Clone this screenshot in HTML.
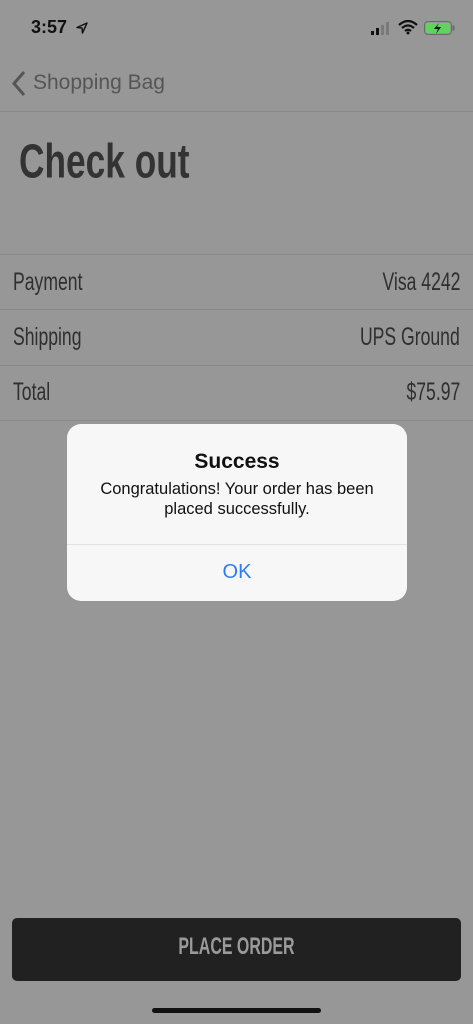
<!DOCTYPE html>
<html><head><style>
body{margin:0;width:473px;height:1024px;background:#979797;position:relative;overflow:hidden;font-family:"Liberation Sans",sans-serif}
.a{position:absolute}
.n{font-family:"Liberation Sans Narrow","Liberation Sans",sans-serif;color:#2f2f2f}
.line{position:absolute;left:0;width:473px;height:1px;background:#8a8a8a}
.l,.r{position:absolute;font-size:22px;white-space:nowrap}
.l{left:13px;transform:scale(0.8,1.15);transform-origin:left center}
.r{right:13px;transform:scale(0.8,1.15);transform-origin:right center}
</style></head><body>
<div class="a" style="left:31px;top:17px;font-size:18px;font-weight:bold;color:#111">3:57</div>
<svg class="a" style="left:76px;top:22px" width="12" height="12" viewBox="0 0 12 12"><path d="M11 1L1 5.5 6 6 6.5 11Z" fill="none" stroke="#111" stroke-width="1.5" stroke-linejoin="round"/></svg>
<svg class="a" style="left:370px;top:22px" width="24" height="14"><rect x="1" y="9" width="3" height="4" fill="#111"/><rect x="6" y="6" width="3" height="7" fill="#111"/><rect x="11" y="3" width="3" height="10" fill="#7a7a7a"/><rect x="16" y="0" width="3" height="13" fill="#7a7a7a"/></svg>
<svg class="a" style="left:398px;top:20px" width="20" height="15" viewBox="0 0 20 15"><path d="M1 5Q10-3 19 5M4 8Q10 3 16 8M7 11Q10 8.5 13 11" fill="none" stroke="#111" stroke-width="2.2"/><circle cx="10" cy="13" r="1.5" fill="#111"/></svg>
<svg class="a" style="left:424px;top:21px" width="31" height="15"><rect x="0.5" y="0.5" width="27" height="13" rx="3.5" fill="none" stroke="#6a6a6a"/><rect x="2" y="2" width="24" height="10" rx="2" fill="#5fd35f"/><rect x="28.5" y="4.5" width="2" height="5" fill="#6a6a6a"/><path d="M15 2L10 8h4l-2 5 5-7h-4z" fill="#111"/></svg>
<svg class="a" style="left:11px;top:70px" width="16" height="27"><path d="M13 2L3 13.5 13 25" fill="none" stroke="#555" stroke-width="3"/></svg>
<div class="a" style="left:33px;top:71px;font-size:21px;color:#555">Shopping Bag</div>
<div class="line" style="top:111px"></div>
<div class="a n" style="left:19px;top:134px;font-size:42px;font-weight:bold;color:#333;transform:scale(0.84,1.15);transform-origin:top left;white-space:nowrap">Check out</div>
<div class="line" style="top:254px"></div>
<div class="l n" style="top:269px">Payment</div><div class="r n" style="top:269px">Visa 4242</div>
<div class="line" style="top:309px"></div>
<div class="l n" style="top:324px">Shipping</div><div class="r n" style="top:324px">UPS Ground</div>
<div class="line" style="top:365px"></div>
<div class="l n" style="top:379px">Total</div><div class="r n" style="top:379px">$75.97</div>
<div class="line" style="top:420px"></div>
<div class="a" style="left:67px;top:424px;width:340px;height:177px;background:#f7f7f7;border-radius:14px;text-align:center">
<div style="margin-top:26px;font-size:21px;font-weight:bold;color:#111">Success</div>
<div style="margin-top:5px;font-size:16.5px;line-height:20px;color:#111;white-space:nowrap">Congratulations! Your order has been<br>placed successfully.</div>
<div style="position:absolute;top:120px;left:0;right:0;height:1px;background:#e2e2e2"></div>
<div style="position:absolute;top:137px;left:0;right:0;font-size:20px;color:#2f7bf5">OK</div>
</div>
<div class="a" style="left:12px;top:918px;width:449px;height:63px;background:#212121;border-radius:5px"></div>
<div class="a n" style="left:12px;width:449px;top:935px;text-align:center;font-size:21px;font-weight:bold;color:#9a9a9a;transform:scale(0.76,1.15)">PLACE ORDER</div>
<div class="a" style="left:152px;top:1008px;width:169px;height:5px;border-radius:3px;background:#111"></div>
</body></html>
